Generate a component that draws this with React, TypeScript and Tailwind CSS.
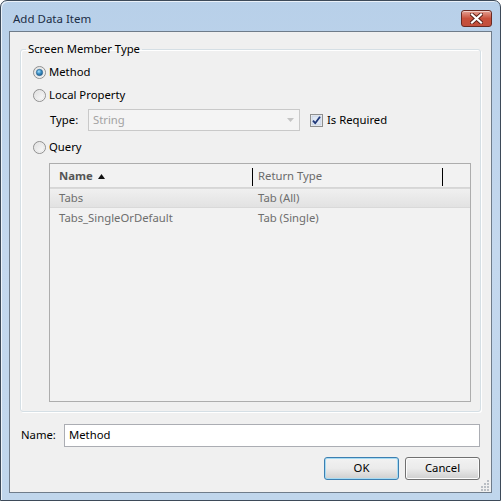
import React from "react";

const font = { fontFamily: '"Noto Sans", "Open Sans", sans-serif' };

function Radio({ checked }: { checked?: boolean }) {
  return (
    <svg width="13" height="13" viewBox="0 0 13 13" className="shrink-0">
      <defs>
        <linearGradient id={checked ? "rgc" : "rgu"} x1="0" y1="0" x2="1" y2="1">
          <stop offset="0" stopColor="#dcdcdc" />
          <stop offset="1" stopColor="#ffffff" />
        </linearGradient>
        <radialGradient id="dot" cx="0.4" cy="0.35" r="0.7">
          <stop offset="0" stopColor="#a6e0ff" />
          <stop offset="0.5" stopColor="#3a8fc4" />
          <stop offset="1" stopColor="#1c5a8a" />
        </radialGradient>
      </defs>
      <circle cx="6.5" cy="6.5" r="6" fill={`url(#${checked ? "rgc" : "rgu"})`} stroke="#8f8f8f" strokeWidth="1" />
      <circle cx="6.5" cy="6.5" r="4.5" fill="none" stroke="#e8e8e8" strokeWidth="1" />
      {checked && <circle cx="6.5" cy="6.5" r="3.2" fill="url(#dot)" stroke="#2a5f8c" strokeWidth="0.6" />}
    </svg>
  );
}

function Checkbox() {
  return (
    <svg width="13" height="13" viewBox="0 0 13 13" className="shrink-0">
      <rect x="0.5" y="0.5" width="12" height="12" fill="#f4f4f4" stroke="#8e8f8f" />
      <rect x="2" y="2" width="9" height="9" fill="#dfe7f3" stroke="#b4c3d9" strokeWidth="0.6" />
      <path d="M3 6.6 L5.2 9.2 L10 2.8" fill="none" stroke="#21397a" strokeWidth="1.8" strokeLinejoin="round" />
    </svg>
  );
}

export default function App() {
  return (
    <div className="w-[501px] h-[501px] bg-white" style={font}>
      <div className="w-[501px] h-[501px] rounded-t-[7px] border border-[#3d4a59] bg-gradient-to-b from-[#b8d0e9] via-[#c4d8ee] to-[#c0d6ec] flex flex-col shadow-[inset_1px_1px_0_rgba(255,255,255,0.7)]">
        {/* Title bar */}
        <div className="h-[30px] flex items-start justify-between pl-[12px] pr-[8px] shrink-0">
          <div className="pt-[10px] text-[11.5px] leading-[16px] text-[#1b2d45]">Add Data Item</div>
          <div className="mt-[9px] w-[31px] h-[17px] rounded-[3px] border border-[#6b2a22] bg-gradient-to-b from-[#e4a093] via-[#c8503b] to-[#c24f3d] flex items-center justify-center shadow-[inset_0_1px_0_rgba(255,255,255,0.5)]">
            <svg width="13" height="11" viewBox="0 0 13 11">
              <path d="M2 1.5 L11 9.5 M11 1.5 L2 9.5" stroke="#5a1f17" strokeWidth="4" strokeLinecap="square" />
              <path d="M2 1.5 L11 9.5 M11 1.5 L2 9.5" stroke="#ffffff" strokeWidth="2.2" strokeLinecap="square" />
            </svg>
          </div>
        </div>

        {/* Client area */}
        <div className="flex-1 mx-[8px] mb-[7px] border border-[#6f7c8a] bg-[#f0f0f0] flex flex-col px-[10px] pt-[9px] relative text-[11.3px]">
          <fieldset className="border border-[#d5dfe5] rounded-[3px] shadow-[inset_1px_1px_0_#ffffff,1px_1px_0_#ffffff] p-0 m-0">
            <legend className="ml-[5px] px-[2px] leading-[16px] text-black">Screen Member Type</legend>
            <div className="flex flex-col pl-[12px] pr-[9px] pb-[9px]">
              <div className="h-[23px] flex items-center gap-[3px] mt-[4px]">
                <Radio checked />
                <span className="text-black">Method</span>
              </div>
              <div className="h-[23px] flex items-center gap-[3px]">
                <Radio />
                <span className="text-black">Local Property</span>
              </div>
              <div className="h-[26px] flex items-center pl-[17px]">
                <span className="w-[38px] text-black">Type:</span>
                <div className="w-[212px] h-[22px] border border-[#c9c9c9] bg-[#f4f4f4] flex items-center justify-between pl-[4px] pr-[5px]">
                  <span className="text-[#a3a3a3]">String</span>
                  <svg width="7" height="4" viewBox="0 0 7 4"><path d="M0 0 H7 L3.5 4 Z" fill="#c4c4c4" /></svg>
                </div>
                <div className="ml-[10px] flex items-center gap-[4px]">
                  <Checkbox />
                  <span className="text-black">Is Required</span>
                </div>
              </div>
              <div className="h-[23px] flex items-center gap-[3px] mt-[3px]">
                <Radio />
                <span className="text-black">Query</span>
              </div>
              <div className="ml-[16px] mt-[4px] h-[239px] border border-[#adadad] bg-[#f2f2f2] flex flex-col">
                <div className="h-[24px] flex items-center border-b border-[#d6d6d6] pt-[2px]">
                  <div className="w-[202px] h-full flex items-center pl-[9px]">
                    <span className="font-bold text-[#555] flex items-center gap-[5px]">
                      Name
                      <svg width="7" height="5" viewBox="0 0 7 5"><path d="M0 5 H7 L3.5 0 Z" fill="#111" /></svg>
                    </span>
                  </div>
                  <div className="w-[1px] h-[18px] bg-black" />
                  <div className="w-[189px] pl-[5px] text-[#6b6b6b]">Return Type</div>
                  <div className="w-[1px] h-[18px] bg-black" />
                </div>
                <div className="h-[20px] flex items-center text-[#6e6e6e] bg-gradient-to-b from-[#f0f0f0] to-[#e2e2e2] border-y border-[#d9d9d9]">
                  <div className="w-[203px] pl-[9px]">Tabs</div>
                  <div className="pl-[5px]">Tab (All)</div>
                </div>
                <div className="h-[20px] flex items-center text-[#6e6e6e]">
                  <div className="w-[203px] pl-[9px]">Tabs_SingleOrDefault</div>
                  <div className="pl-[5px]">Tab (Single)</div>
                </div>
              </div>
            </div>
          </fieldset>

          <div className="mt-[12px] flex items-center">
            <span className="w-[43px] ml-[1px] text-black">Name:</span>
            <div className="flex-1 mr-[1px] h-[23px] border border-[#abadb3] bg-white flex items-center pl-[4px] text-black">
              Method
            </div>
          </div>

          <div className="mt-[10px] flex justify-end gap-[6px] mr-[1px]">
            <button className="w-[75px] h-[23px] rounded-[3px] border border-[#3c7fb1] bg-gradient-to-b from-[#f2f2f2] via-[#ebebeb] to-[#cfcfcf] text-black shadow-[inset_0_0_0_1px_#a6dbf3]">
              OK
            </button>
            <button className="w-[75px] h-[23px] rounded-[3px] border border-[#707070] bg-gradient-to-b from-[#f2f2f2] via-[#ebebeb] to-[#cfcfcf] text-black shadow-[inset_0_0_0_1px_#fcfcfc]">
              Cancel
            </button>
          </div>

          <svg className="absolute right-[1px] bottom-[1px]" width="11" height="11" viewBox="0 0 11 11">
            {[
              [8, 0], [8, 3], [5, 3], [8, 6], [5, 6], [2, 6], [8, 9], [5, 9], [2, 9],
            ].map(([x, y], i) => (
              <rect key={i} x={x} y={y} width="2" height="2" fill="#b9bec4" />
            ))}
          </svg>
        </div>
      </div>
    </div>
  );
}
